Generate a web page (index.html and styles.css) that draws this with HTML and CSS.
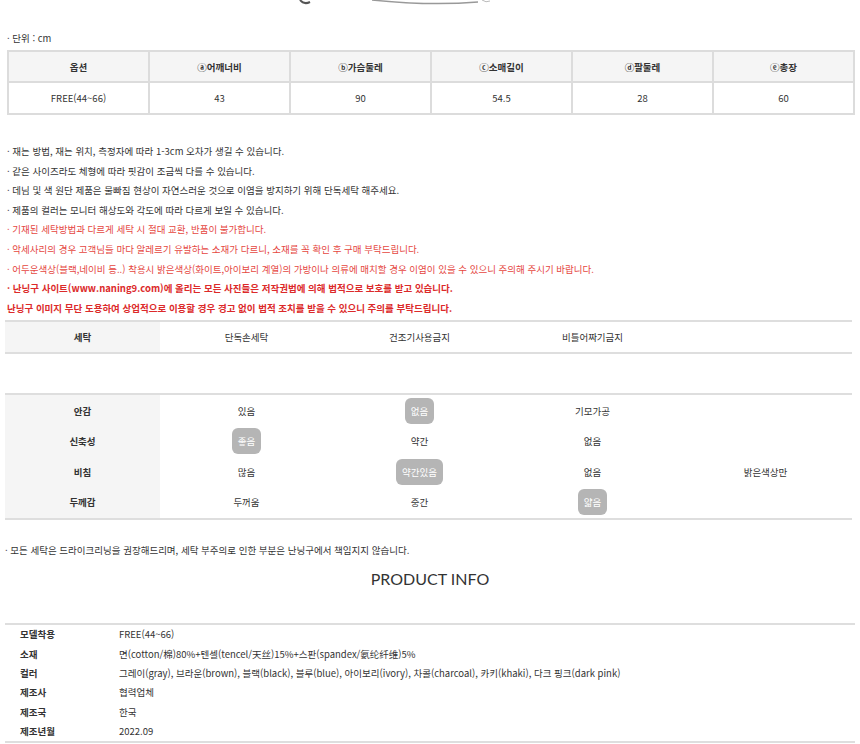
FILE: index.html
```html
<!DOCTYPE html>
<html lang="ko">
<head>
    <meta charset="UTF-8">
    <title>상품 상세</title>
    <link rel="stylesheet" href="styles.css">
</head>
<body>

<div class="top-art">
    <svg width="860" height="8" viewBox="0 0 860 8">
        <path d="M300 0 Q304 5 310 2" fill="none" stroke="#555" stroke-width="2"/>
        <path d="M372 0 Q430 6 478 2" fill="none" stroke="#999" stroke-width="1.5"/>
        <path d="M482 0 Q486 3 490 1" fill="none" stroke="#bbb" stroke-width="1"/>
    </svg>
</div>

<main class="wrap">

    <p class="unit">· 단위 : cm</p>
    <table class="size">
        <tr>
            <th>옵션</th>
            <th>ⓐ어깨너비</th>
            <th>ⓑ가슴둘레</th>
            <th>ⓒ소매길이</th>
            <th>ⓓ팔둘레</th>
            <th>ⓔ총장</th>
        </tr>
        <tr>
            <td>FREE(44~66)</td>
            <td>43</td>
            <td>90</td>
            <td>54.5</td>
            <td>28</td>
            <td>60</td>
        </tr>
    </table>

    <ul class="notes">
        <li>· 재는 방법, 재는 위치, 측정자에 따라 1-3cm 오차가 생길 수 있습니다.</li>
        <li>· 같은 사이즈라도 체형에 따라 핏감이 조금씩 다를 수 있습니다.</li>
        <li>· 데님 및 색 원단 제품은 물빠짐 현상이 자연스러운 것으로 이염을 방지하기 위해 단독세탁 해주세요.</li>
        <li>· 제품의 컬러는 모니터 해상도와 각도에 따라 다르게 보일 수 있습니다.</li>
        <li class="warn">· 기재된 세탁방법과 다르게 세탁 시 절대 교환, 반품이 불가합니다.</li>
        <li class="warn">· 악세사리의 경우 고객님들 마다 알레르기 유발하는 소재가 다르니, 소재를 꼭 확인 후 구매 부탁드립니다.</li>
        <li class="warn">· 어두운색상(블랙,네이비 등..) 착용시 밝은색상(화이트,아이보리 계열)의 가방이나 의류에 매치할 경우 이염이 있을 수 있으니 주의해 주시기 바랍니다.</li>
        <li class="strong">· 난닝구 사이트(www.naning9.com)에 올리는 모든 사진들은 저작권법에 의해 법적으로 보호를 받고 있습니다.</li>
        <li class="strong">난닝구 이미지 무단 도용하여 상업적으로 이용할 경우 경고 없이 법적 조치를 받을 수 있으니 주의를 부탁드립니다.</li>
    </ul>

    <table class="spec wash">
        <tr>
            <th>세탁</th>
            <td>단독손세탁</td>
            <td>건조기사용금지</td>
            <td>비틀어짜기금지</td>
            <td></td>
        </tr>
    </table>

    <table class="spec fabric">
        <tr>
            <th>안감</th>
            <td>있음</td>
            <td><span class="on">없음</span></td>
            <td>기모가공</td>
            <td></td>
        </tr>
        <tr>
            <th>신축성</th>
            <td><span class="on">좋음</span></td>
            <td>약간</td>
            <td>없음</td>
            <td></td>
        </tr>
        <tr>
            <th>비침</th>
            <td>많음</td>
            <td><span class="on">약간있음</span></td>
            <td>없음</td>
            <td>밝은색상만</td>
        </tr>
        <tr>
            <th>두께감</th>
            <td>두꺼움</td>
            <td>중간</td>
            <td><span class="on">얇음</span></td>
            <td></td>
        </tr>
    </table>

    <p class="care">· 모든 세탁은 드라이크리닝을 권장해드리며, 세탁 부주의로 인한 부분은 난닝구에서 책임지지 않습니다.</p>

    <h2 class="title">PRODUCT INFO</h2>

    <table class="info">
        <tr><th>모델착용</th><td>FREE(44~66)</td></tr>
        <tr><th>소재</th><td>면(cotton/棉)80%+텐셀(tencel/天丝)15%+스판(spandex/氨纶纤维)5%</td></tr>
        <tr><th>컬러</th><td>그레이(gray), 브라운(brown), 블랙(black), 블루(blue), 아이보리(ivory), 차콜(charcoal), 카키(khaki), 다크 핑크(dark pink)</td></tr>
        <tr><th>제조사</th><td>협력업체</td></tr>
        <tr><th>제조국</th><td>한국</td></tr>
        <tr><th>제조년월</th><td>2022.09</td></tr>
    </table>

</main>

</body>
</html>
```

FILE: styles.css
```css
html, body {
    margin: 0;
    padding: 0;
    background: #fff;
}
body {
    font-family: "Noto Sans CJK KR", "Noto Sans", sans-serif;
    font-size: 9.5px;
    color: #333;
}
ul, li {
    list-style: none;
    padding: 0;
    margin: 0;
}
p, h2 {
    margin: 0;
}
table {
    border-collapse: collapse;
}

.top-art {
    height: 8px;
    line-height: 0;
}
.top-art svg {
    display: block;
}

.wrap {
    padding: 0 5px;
}

.unit {
    margin-top: 22px;
    padding-left: 2px;
    line-height: 16px;
}

.size {
    margin: 4px 0 0 2px;
    width: 848px;
    table-layout: fixed;
}
.size th, .size td {
    border: 2px solid #dcdcdc;
    text-align: center;
    font-weight: normal;
}
.size th {
    height: 27px;
    background: #f5f5f5;
    font-weight: bold;
}
.size td {
    height: 28px;
}

.notes {
    margin-top: 27px;
    padding-left: 2px;
}
.notes li {
    line-height: 19.6px;
}
.notes .warn {
    color: #e5473f;
}
.notes .strong {
    color: #dc2a2a;
    font-weight: bold;
}

.spec {
    width: 847px;
    table-layout: fixed;
    border-top: 2px solid #dedede;
    border-bottom: 2px solid #dedede;
}
.spec th {
    width: 155px;
    background: #f5f5f5;
    font-weight: bold;
}
.spec th, .spec td {
    padding: 0;
    text-align: center;
}
.wash {
    margin-top: 2px;
}
.wash th, .wash td {
    height: 30px;
}
.fabric {
    margin-top: 39px;
}
.fabric th, .fabric td {
    height: 30.5px;
}
.fabric tr:last-child th,
.fabric tr:last-child td {
    height: 31px;
}

.on {
    display: inline-block;
    padding: 0 6px;
    line-height: 26px;
    border-radius: 6px;
    background: #b5b5b5;
    color: #fff;
}

.care {
    margin-top: 22px;
    line-height: 16px;
}

.title {
    margin-top: 11px;
    text-align: center;
    font-family: Lato, "Noto Sans", sans-serif;
    font-weight: normal;
    font-size: 16px;
    line-height: 20px;
    color: #333;
}

.info {
    margin-top: 34px;
    width: 850px;
    border-top: 2px solid #dedede;
    border-bottom: 2px solid #dedede;
}
.info th, .info td {
    height: 19.3px;
    padding: 0;
    text-align: left;
}
.info th {
    width: 99px;
    padding-left: 15px;
    font-weight: bold;
}
```
